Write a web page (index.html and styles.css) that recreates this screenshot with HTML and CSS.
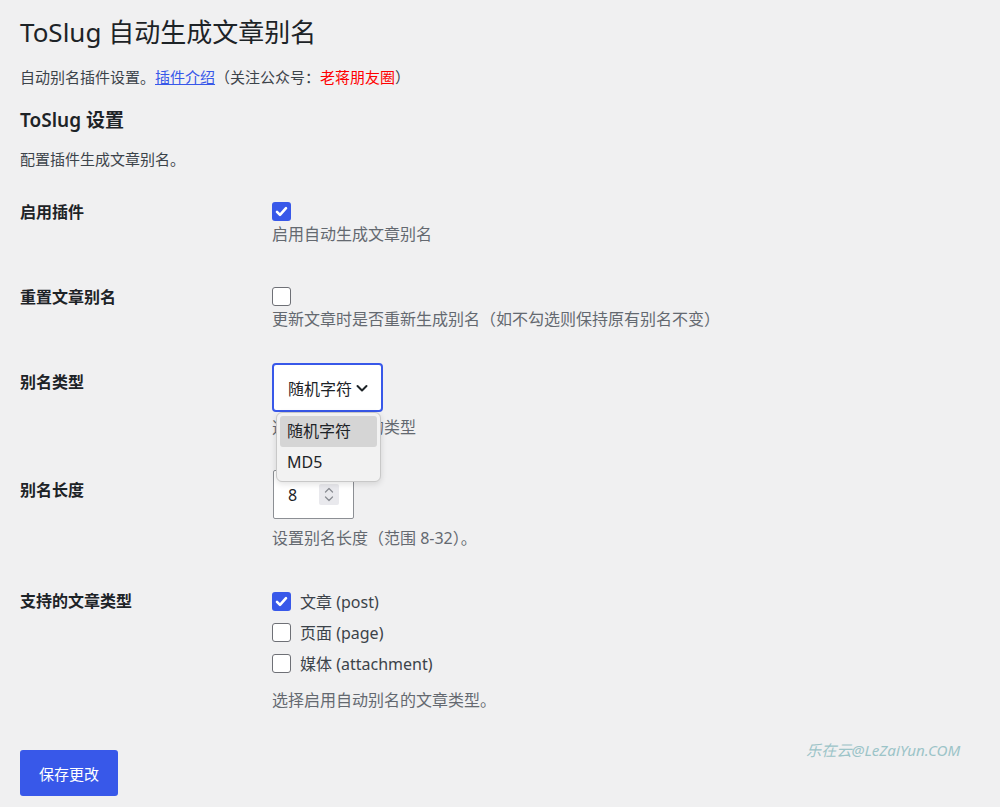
FILE: index.html
```html
<!DOCTYPE html>
<html lang="zh-CN">
<head>
    <meta charset="UTF-8">
    <meta name="viewport" content="width=device-width, initial-scale=1.0">
    <title>ToSlug 自动生成文章别名</title>
    <link rel="stylesheet" href="styles.css">
</head>
<body>
    <div class="wrap">
        <h1>ToSlug 自动生成文章别名</h1>
        <p class="intro">自动别名插件设置。<a href="#">插件介绍</a>（关注公众号：<span class="red">老蒋朋友圈</span>）</p>

        <h2>ToSlug 设置</h2>
        <p class="intro section-desc">配置插件生成文章别名。</p>

        <form class="form-table">
            <!-- 启用插件 -->
            <div class="row">
                <div class="th">启用插件</div>
                <div class="td">
                    <div class="check-line">
                        <span class="cb checked">
                            <svg width="19" height="19" viewBox="0 0 19 19"><path d="M5 9.8l3 3 6-6.6" fill="none" stroke="#fff" stroke-width="2.6" stroke-linecap="round" stroke-linejoin="round"/></svg>
                        </span>
                    </div>
                    <p class="description">启用自动生成文章别名</p>
                </div>
            </div>

            <!-- 重置文章别名 -->
            <div class="row">
                <div class="th">重置文章别名</div>
                <div class="td">
                    <div class="check-line">
                        <span class="cb"></span>
                    </div>
                    <p class="description">更新文章时是否重新生成别名（如不勾选则保持原有别名不变）</p>
                </div>
            </div>

            <!-- 别名类型 -->
            <div class="row">
                <div class="th">别名类型</div>
                <div class="td td-select">
                    <div class="select-wrap">
                        <div class="select">
                            <span>随机字符</span>
                            <svg width="14" height="14" viewBox="0 0 14 14"><path d="M2.5 5l4.5 4.5 4.5-4.5" fill="none" stroke="#1d2327" stroke-width="2" stroke-linecap="round" stroke-linejoin="round"/></svg>
                        </div>
                        <ul class="options">
                            <li class="active">随机字符</li>
                            <li>MD5</li>
                        </ul>
                    </div>
                    <p class="description">选择生成别名的类型</p>
                </div>
            </div>

            <!-- 别名长度 -->
            <div class="row">
                <div class="th">别名长度</div>
                <div class="td td-number">
                    <div class="number">
                        <span class="number-value">8</span>
                        <span class="spin">
                            <svg width="20" height="21" viewBox="0 0 20 21"><path d="M6.5 8l3.5-3.5 3.5 3.5M6.5 13l3.5 3.5 3.5-3.5" fill="none" stroke="#8a8d93" stroke-width="1.3" stroke-linecap="round" stroke-linejoin="round"/></svg>
                        </span>
                    </div>
                    <p class="description">设置别名长度（范围 8-32）。</p>
                </div>
            </div>

            <!-- 支持的文章类型 -->
            <div class="row">
                <div class="th">支持的文章类型</div>
                <div class="td td-types">
                    <label class="type-line">
                        <span class="cb checked">
                            <svg width="19" height="19" viewBox="0 0 19 19"><path d="M5 9.8l3 3 6-6.6" fill="none" stroke="#fff" stroke-width="2.6" stroke-linecap="round" stroke-linejoin="round"/></svg>
                        </span>
                        文章 (post)
                    </label>
                    <label class="type-line"><span class="cb"></span>页面 (page)</label>
                    <label class="type-line"><span class="cb"></span>媒体 (attachment)</label>
                    <p class="description types-desc">选择启用自动别名的文章类型。</p>
                </div>
            </div>

            <p class="submit"><button type="button" class="button-primary">保存更改</button></p>
        </form>

        <div class="watermark">乐在云@LeZaiYun.COM</div>
    </div>
</body>
</html>
```

FILE: styles.css
```css
body {
    margin: 0;
    background-color: #f0f0f1;
    color: #3c434a;
    font-family: "Noto Sans", "Noto Sans CJK SC", sans-serif;
}
.wrap {
    position: relative;
    padding: 15px 20px 0 20px;
    min-height: 792px;
}
h1 {
    margin: 0;
    font-size: 26px;
    font-weight: 400;
    line-height: 34px;
    color: #1d2327;
}
h2 {
    margin: 19px 0 0 0;
    font-size: 19px;
    font-weight: 600;
    line-height: 26px;
    color: #1d2327;
}
.intro {
    margin: 17px 0 0 0;
    font-size: 15px;
    line-height: 22px;
    color: #3c434a;
}
.intro a {
    color: #3858e9;
    text-decoration: underline;
}
.red {
    color: #ff0000;
}
.section-desc {
    margin-top: 15px;
}
.form-table {
    margin-top: 9px;
}
.row {
    display: grid;
    grid-template-columns: 252px 1fr;
    padding-bottom: 19px;
}
.th {
    padding-top: 22px;
    font-size: 16px;
    font-weight: 600;
    line-height: 22px;
    color: #1d2327;
}
.td {
    padding-top: 20px;
}
.td-select {
    padding-top: 14px;
}
.td-number {
    padding-top: 13px;
}
.td-types {
    padding-top: 22px;
}
.description {
    margin: 5px 0 0 0;
    font-size: 16px;
    line-height: 22px;
    color: #646970;
}
.td-select .description {
    margin-top: 4px;
}
.td-number .description {
    margin-top: 8px;
}
.check-line {
    height: 19px;
}
.cb {
    display: inline-block;
    box-sizing: border-box;
    width: 19px;
    height: 19px;
    border: 1px solid #6e7076;
    border-radius: 3px;
    background: #fff;
    vertical-align: middle;
}
.cb svg {
    display: block;
}
.cb.checked {
    border: none;
    background: #3858e9;
}
.select-wrap {
    position: relative;
    width: 111px;
}
.select {
    box-sizing: border-box;
    display: flex;
    align-items: center;
    gap: 3px;
    height: 49px;
    padding: 0 6px 0 14px;
    border: 2px solid #3858e9;
    border-radius: 4px;
    background: #fff;
    font-size: 16px;
    color: #1d2327;
}
.options {
    position: absolute;
    top: 49px;
    left: 4px;
    width: 105px;
    box-sizing: border-box;
    margin: 0;
    padding: 3px;
    list-style: none;
    background: #f2f2f2;
    border: 1px solid #c8c8c8;
    border-radius: 6px;
    box-shadow: 0 2px 6px rgba(0,0,0,0.12);
    z-index: 2;
}
.options li {
    height: 31px;
    line-height: 31px;
    padding-left: 7px;
    font-size: 16px;
    color: #1d2327;
    border-radius: 3px;
}
.options li.active {
    background: #d5d5d5;
}
.number {
    box-sizing: border-box;
    display: flex;
    align-items: center;
    width: 81px;
    height: 49px;
    margin-left: 1px;
    padding: 0 14px 0 14px;
    border: 1px solid #8c8f94;
    border-radius: 2px;
    background: #fff;
    font-size: 16px;
    color: #1d2327;
}
.number-value {
    flex: 1;
}
.spin {
    width: 20px;
    height: 21px;
    background: #e9e9ed;
    border-radius: 2px;
}
.spin svg {
    display: block;
}
.type-line {
    display: flex;
    align-items: center;
    gap: 9px;
    height: 22px;
    margin-bottom: 9px;
    font-size: 16px;
    color: #3c434a;
}
.types-desc {
    margin-top: 15px;
}
.submit {
    margin: 20px 0 0 0;
    padding: 0;
}
.button-primary {
    width: 98px;
    height: 46px;
    padding: 0;
    border: none;
    border-radius: 3px;
    background: #3858e9;
    color: #fff;
    font-family: "Noto Sans", "Noto Sans CJK SC", sans-serif;
    font-size: 15px;
    cursor: pointer;
}
.watermark {
    position: absolute;
    left: 806px;
    top: 739px;
    font-size: 15.2px;
    font-style: italic;
    line-height: 22px;
    color: #9cc4c8;
}
```
